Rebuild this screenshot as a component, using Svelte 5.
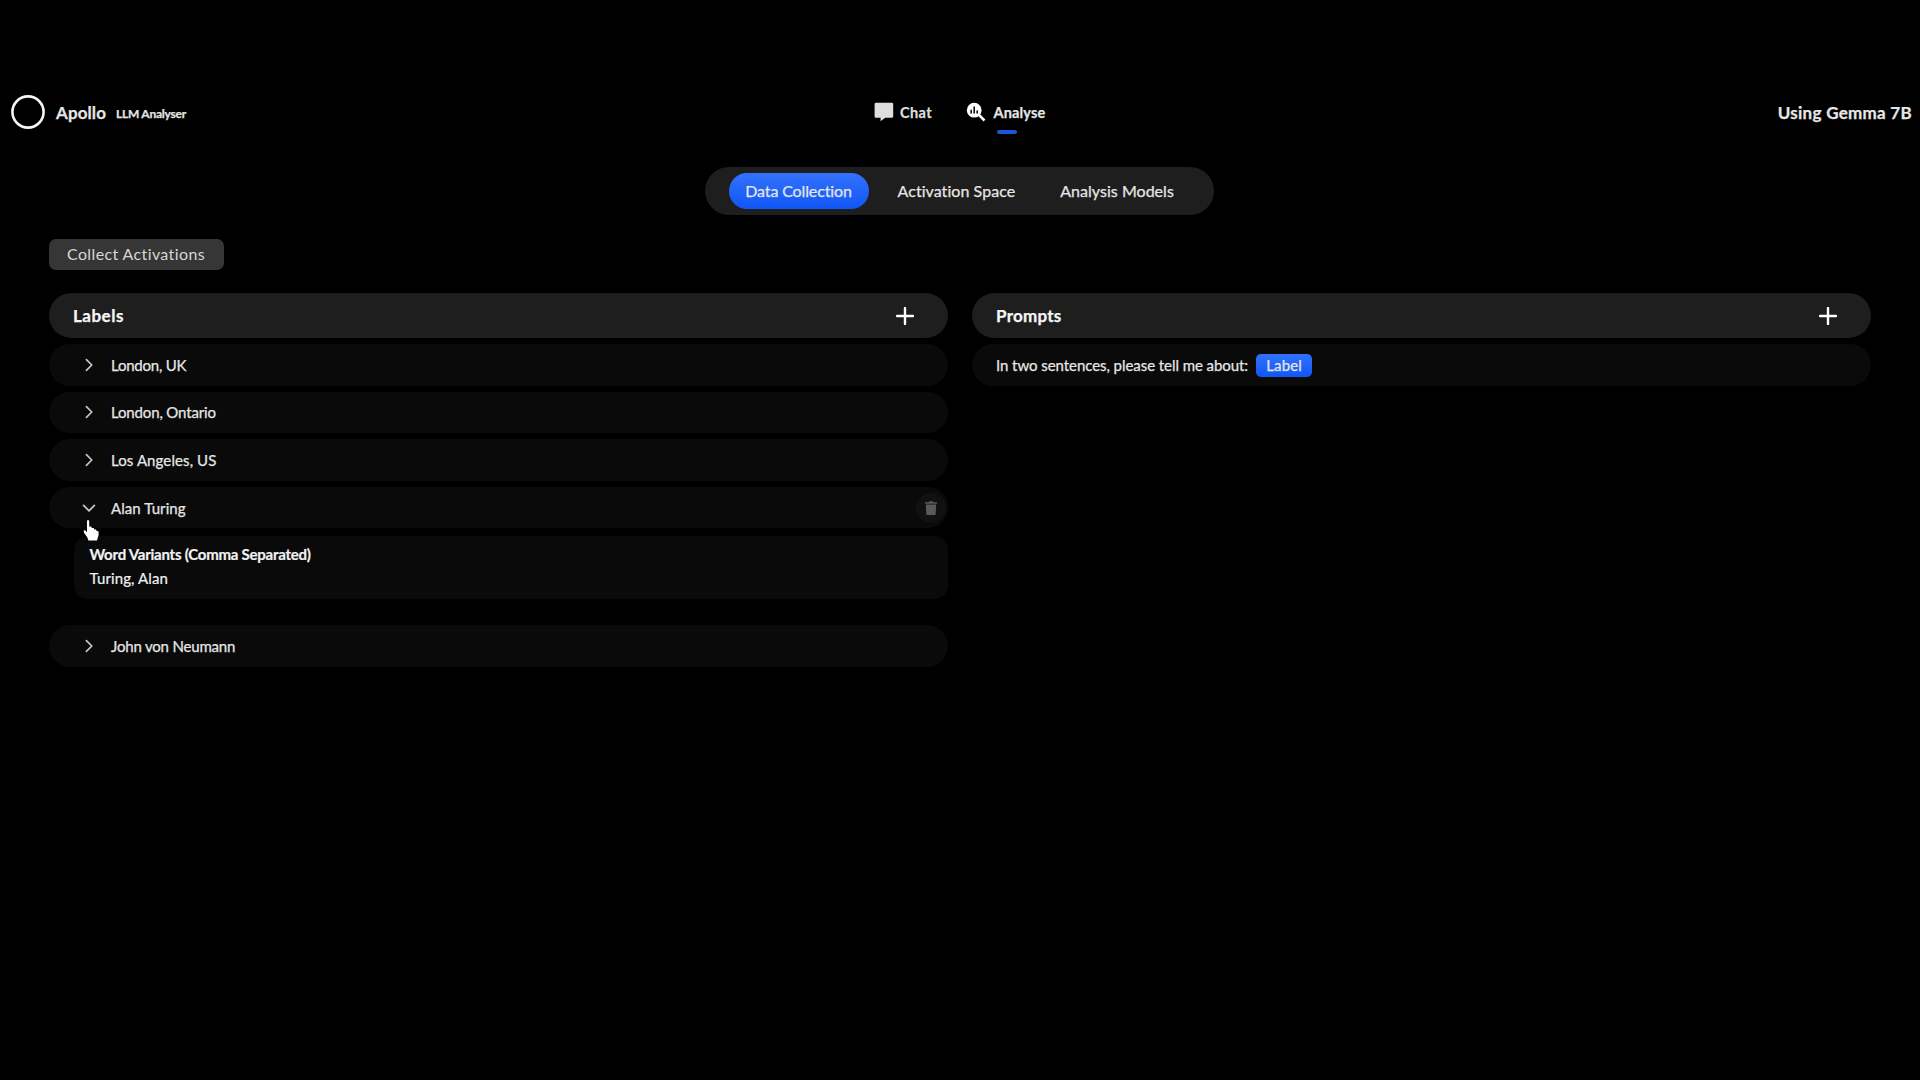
<script>
  const labels = [
    { name: 'London, UK', fit: 'uk' },
    { name: 'London, Ontario', fit: 'ontario' },
    { name: 'Los Angeles, US', fit: 'la' },
    { name: 'Alan Turing', fit: 'turing', open: true, variants: 'Turing, Alan' },
    { name: 'John von Neumann', fit: 'neumann' }
  ];
</script>

{#snippet plus()}
  <svg class="plus" viewBox="0 0 18 18"><path d="M9 1v16M1 9h16" /></svg>
{/snippet}

<div class="app">
  <header>
    <div class="brand">
      <svg class="ring" viewBox="0 0 36 36"><circle cx="18" cy="18" r="15.6" /></svg>
      <span class="name">Apollo</span>
      <span class="tag">LLM Analyser</span>
    </div>
    <nav>
      <a class="chat">
        <svg viewBox="0 0 20 20" width="20" height="20"><path fill="#dedede" d="M2 .8h15.8a1.4 1.4 0 0 1 1.4 1.4v12.2a1.4 1.4 0 0 1-1.4 1.4h-6.6L6.6 19.2v-3.4H2a1.4 1.4 0 0 1-1.4-1.4V2.2A1.4 1.4 0 0 1 2 .8z" /></svg>
        <span>Chat</span>
      </a>
      <a class="analyse">
        <svg viewBox="0 0 20 20" width="20" height="20">
          <circle cx="8.2" cy="8.2" r="7.4" fill="#fff" />
          <path d="M12.5 12.5l6 6" stroke="#fff" stroke-width="2.5" />
          <path d="M5.2 7.8v3.6M8.2 4.6v6.8M11.2 8.6v2.8" stroke="#111" stroke-width="1.6" />
        </svg>
        <span>Analyse</span>
      </a>
    </nav>
    <div class="model">Using Gemma 7B</div>
  </header>

  <div class="tabs">
    <button class="tab active">Data Collection</button>
    <button class="tab space">Activation Space</button>
    <button class="tab models">Analysis Models</button>
  </div>

  <main>
    <button class="collect">Collect Activations</button>
    <div class="columns">
      <section>
        <div class="head"><span class="l">Labels</span>{@render plus()}</div>
        {#each labels as label}
          <div class="row">
            <svg class="chev" class:open={label.open} viewBox="0 0 14 14"><path d="M4.4 1.6L9.8 7L4.4 12.4" /></svg>
            <span class={label.fit}>{label.name}</span>
            {#if label.open}
              <span class="trash"><svg viewBox="0 0 12 14" width="12" height="14"><path d="M0 1.2h3.6L4.2 .3h3.6l.6.9H12v1.6H0zM.8 3.6h10.4L10.6 14H1.4z" /></svg></span>
            {/if}
          </div>
          {#if label.open}
            <div class="panel">
              <strong>Word Variants (Comma Separated)</strong>
              <span>{label.variants}</span>
              <svg class="pointer" viewBox="0 0 16 21" width="16" height="21"><path d="M4 1.2Q4 0 5 0T6.2 1.2V6.6L8.6 6.8V8L11 8.1V9.3L13.2 9.4L13.4 10.8L15.6 11.4V15L14 20.6H5.4L4.4 17.6L1 12.8L.6 10.6L2 10.2L4 12.2z" /></svg>
            </div>
          {/if}
        {/each}
      </section>
      <section>
        <div class="head"><span class="p">Prompts</span>{@render plus()}</div>
        <div class="row prompt">
          <span class="sentence">In two sentences, please tell me about:</span>
          <span class="chip">Label</span>
        </div>
      </section>
    </div>
  </main>
</div>

<style>
  :global(body) { background: #000; }
  .app {
    width: 1920px; height: 1080px; overflow: hidden; box-sizing: border-box;
    padding-top: 88px; background: #000; color: #e6e6e6;
    font-family: Lato, "Liberation Sans", sans-serif;
    font-size: 15px; line-height: 20px; white-space: nowrap;
  }
  button { font: inherit; color: inherit; border: 0; margin: 0; }
  header {
    display: grid; grid-template-columns: 1fr auto 1fr; align-items: center;
    height: 48px; padding: 0 8px 0 10px; box-sizing: border-box; font-weight: 700;
    -webkit-text-stroke: .25px currentColor;
  }
  .brand { display: flex; align-items: center; }
  .ring { width: 36px; height: 36px; fill: none; stroke: #f4f4f4; stroke-width: 2.6; }
  .name { margin-left: 10px; padding-top: 1px; font-size: 17px; letter-spacing: .1px; }
  .tag { margin-left: 10px; padding-top: 3px; font-size: 12px; letter-spacing: -.25px; }
  nav { display: flex; gap: 34px; padding-right: 3px; }
  nav a { display: flex; align-items: center; font-size: 14.5px; position: relative; }
  nav span { padding-top: 1px; }
  .chat { letter-spacing: .4px; color: #dedede; }
  .chat span { margin-left: 6.5px; }
  .analyse { letter-spacing: .15px; }
  .analyse span { margin-left: 7.5px; }
  .analyse::after {
    content: ""; position: absolute; left: 30.5px; top: 28px;
    width: 20px; height: 4px; border-radius: 2px; background: #1c55d8;
  }
  .model { justify-self: end; padding-top: 1px; font-size: 17px; letter-spacing: .28px; }

  .tabs {
    display: flex; align-items: center; width: 509px; height: 48px; box-sizing: border-box;
    margin: 31px 0 0 705px; padding-left: 24px; border-radius: 24px; background: #1e1e1e;
  }
  .tab {
    height: 36px; padding: 0 16px 1px; border-radius: 18px; background: none;
    font-size: 16px; -webkit-text-stroke: .25px currentColor;
  }
  .active { width: 140px; padding-left: 15px; letter-spacing: -.13px; background: linear-gradient(#3472fd, #0f56f6); }
  .space { margin-left: 12.5px; letter-spacing: .06px; }
  .models { margin-left: 13px; letter-spacing: .03px; }

  main { padding: 24px 49px 0 49px; }
  .collect {
    display: block; width: 175px; height: 31px; padding: 0 1px 1px 0; border-radius: 7px;
    background: #363636; color: #d6d6d6; font-size: 16px; letter-spacing: .38px;
  }
  .columns { display: grid; grid-template-columns: 1fr 1fr; gap: 24px; margin-top: 23px; }
  section { display: flex; flex-direction: column; }
  .head {
    display: flex; justify-content: space-between; align-items: center;
    height: 45px; padding: 0 34px 0 24px; margin-bottom: 6px; border-radius: 23px; box-sizing: border-box;
    background: #1e1e1e; color: #f6f6f6; font-size: 17px; font-weight: 700;
    -webkit-text-stroke: .25px currentColor;
  }
  .l { letter-spacing: .5px; }
  .p { letter-spacing: .25px; }
  .plus { width: 18px; height: 18px; fill: none; stroke: #fff; stroke-width: 2.4; stroke-linecap: round; }
  .row {
    display: flex; align-items: center; height: 41.6px; margin-bottom: 6px; box-sizing: border-box;
    padding: 0 2.5px 0 33px; border-radius: 21px; background: #0a0a0a;
    -webkit-text-stroke: .25px currentColor;
  }
  .chev { width: 14px; height: 14px; margin-right: 15px; fill: none; stroke: #c8c8c8; stroke-width: 1.7; stroke-linecap: round; stroke-linejoin: round; }
  .open { transform: rotate(90deg); }
  .uk { letter-spacing: -.23px; }
  .ontario { letter-spacing: -.15px; }
  .la { letter-spacing: .1px; }
  .turing { letter-spacing: .08px; }
  .neumann { letter-spacing: -.18px; }
  .trash {
    display: flex; align-items: center; justify-content: center; margin-left: auto;
    width: 30px; height: 30px; border-radius: 50%; background: #111;
  }
  .trash path { fill: #5a5a5a; }
  .panel {
    position: relative; display: flex; flex-direction: column; gap: 4px; height: 63px; box-sizing: border-box;
    margin: 2px 0 26px 25px; padding: 8px 15.5px; border-radius: 14px; background: #0a0a0a; color: #f2f2f2;
    -webkit-text-stroke: .2px currentColor;
  }
  .panel strong { letter-spacing: -.24px; }
  .panel span { letter-spacing: .12px; }
  .pointer { position: absolute; left: 9px; top: -16px; fill: #fff; }
  .prompt { padding-left: 24px; }
  .sentence { letter-spacing: -.06px; }
  .chip {
    width: 56px; height: 23px; line-height: 22px; margin: 1px 0 0 8px; border-radius: 5px; text-align: center;
    letter-spacing: .15px; background: linear-gradient(#3472fd, #0f56f6);
  }
</style>
